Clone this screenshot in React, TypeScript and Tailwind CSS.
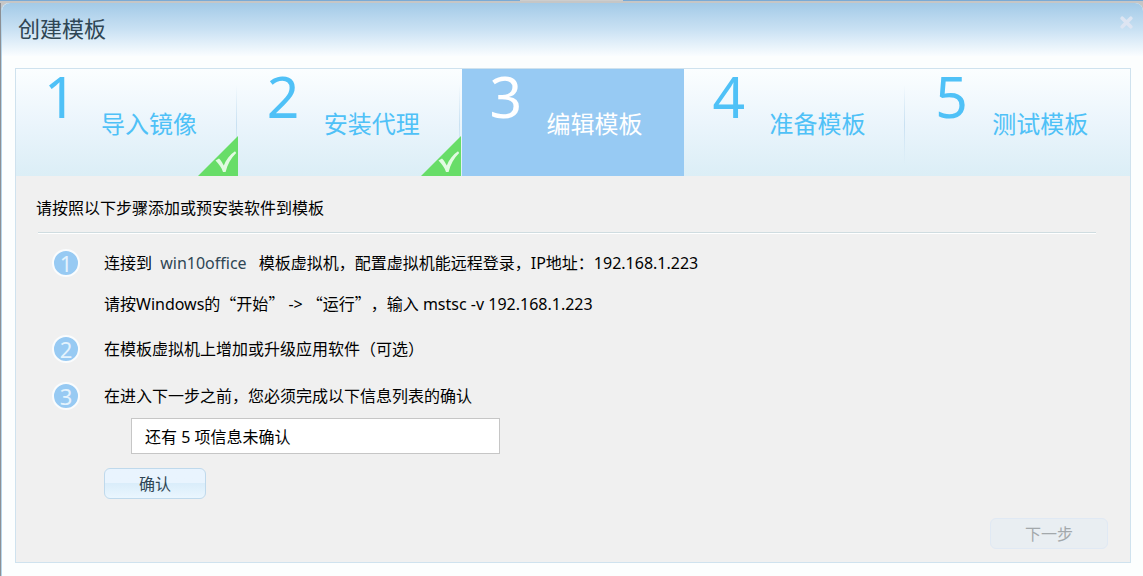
import React from 'react';
import clsx from 'clsx';

type StepState = 'done' | 'active' | 'todo';

const steps: { title: string; state: StepState }[] = [
  { title: '导入镜像', state: 'done' },
  { title: '安装代理', state: 'done' },
  { title: '编辑模板', state: 'active' },
  { title: '准备模板', state: 'todo' },
  { title: '测试模板', state: 'todo' },
];

function DoneMark() {
  return (
    <svg
      className="absolute right-px bottom-0 h-10 w-10"
      viewBox="0 0 40 40"
      aria-label="已完成">
      <path d="M0 40 L40 0 V40 Z" fill="#68dd68" />
      <path
        d="M17.5 24.5 L21 22.5 C23 24.5 24.5 27 25.8 29.5 C28 23.5 32 18.5 37 15.2 L38.2 17 C33 22 29.5 28.5 27.6 36 L25 36 C23.5 31.5 21 28 17.5 24.5 Z"
        fill="#e2fbe2"
      />
    </svg>
  );
}

function Step({ number, title, state }: { number: number; title: string; state: StepState }) {
  const active = state === 'active';
  return (
    <li
      aria-current={active ? 'step' : undefined}
      className={clsx(
        'relative flex flex-1 items-start pl-7',
        active ? 'bg-[#97caf3] text-white' : 'text-[#4fc1f7]'
      )}>
      <span className="w-[57px] text-[57px] leading-[54px]">{number}</span>
      <span className="pt-10 text-2xl leading-[30px]">{title}</span>
      {state === 'done' && <DoneMark />}
      {!active && number !== 5 && (
        <span className="absolute top-4 right-0.5 -z-10 h-20 w-px bg-linear-to-b from-transparent via-[#c9e1f2] to-transparent" />
      )}
    </li>
  );
}

function Bullet({ number }: { number: number }) {
  return (
    <span className="flex h-7 w-7 shrink-0 items-center justify-center rounded-full border-2 border-[#fafcfd] bg-[#97caf3] text-[22px] leading-6 text-[#e4f3fd]">
      {number}
    </span>
  );
}

// full-width quotes, as Chinese text sets them
function Quoted({ children }: { children: string }) {
  return <span className="font-['Noto_Sans_CJK_SC',sans-serif]">“{children}”</span>;
}

export default function App() {
  return (
    <div className="flex min-h-screen flex-col bg-[#c6c6c6] font-['Noto_Sans','Noto_Sans_CJK_SC',sans-serif] text-base leading-6 text-black">
      <div className="flex h-[3px] justify-center border-t border-[#7aaad5]">
        <div className="-mt-px h-px w-[103px] bg-[#cdcdcd]" />
      </div>

      <div className="flex flex-1 flex-col border-l border-[#8c8f94]">
        <div className="flex flex-1 flex-col rounded-t-lg border-l border-[#b5d5ea] bg-[#fcfefe]">
          {/* Title bar */}
          <header className="flex h-[53px] items-start justify-between rounded-t-lg bg-linear-to-b from-[#a3cae7] via-[#c9e1f3] to-[#fafdff] pt-[11px] pr-2.5 pl-4">
            <h1 className="text-[22px] leading-7 text-[#2f4654]">创建模板</h1>
            <button type="button" aria-label="关闭" className="pt-0.5">
              <svg className="h-[13px] w-[13px]" viewBox="0 0 13 13">
                <path d="M2.2 2.2 L10.8 10.8 M10.8 2.2 L2.2 10.8" stroke="#dde5f2" strokeWidth="3.6" strokeLinecap="round" />
              </svg>
            </button>
          </header>

          <main className="mx-3 mt-3 mb-[13px] ml-[13px] flex flex-1 flex-col border border-[#cfe2ee] bg-[#f0f0f0]">
            {/* Wizard steps */}
            <ol className="relative z-0 flex h-[107px] bg-linear-to-b from-[#fbfeff] via-[#ebf5fc] to-[#dbeef6]">
              {steps.map((step, index) => (
                <Step key={step.title} number={index + 1} title={step.title} state={step.state} />
              ))}
            </ol>

            <section className="flex flex-1 flex-col pt-5 pr-[22px] pb-[13px] pl-5">
              <h2>请按照以下步骤添加或预安装软件到模板</h2>
              <hr className="mt-3 mr-3 ml-0.5 h-0.5 border-t border-[#cfdce0] bg-white" />

              <ol className="mt-[15px] ml-4 flex flex-col gap-[19px]">
                <li className="flex gap-6">
                  <Bullet number={1} />
                  <div className="flex flex-col gap-4 pt-0.5">
                    <p>
                      连接到 <span className="mr-2 ml-1 text-[#2f4654]">win10office</span>{' '}
                      模板虚拟机，配置虚拟机能远程登录，IP地址：192.168.1.223
                    </p>
                    <p className="[text-spacing-trim:space-all]">
                      请按Windows的<Quoted>开始</Quoted>
                      <span className="mx-1">-&gt;</span>
                      <Quoted>运行</Quoted>，输入 mstsc -v 192.168.1.223
                    </p>
                  </div>
                </li>
                <li className="flex gap-6">
                  <Bullet number={2} />
                  <p className="pt-0.5">在模板虚拟机上增加或升级应用软件（可选）</p>
                </li>
                <li className="flex gap-6">
                  <Bullet number={3} />
                  <div className="flex flex-col items-start pt-0.5">
                    <label htmlFor="pending">在进入下一步之前，您必须完成以下信息列表的确认</label>
                    <input
                      id="pending"
                      type="text"
                      readOnly
                      value="还有 5 项信息未确认"
                      className="mt-2.5 ml-[27px] h-9 w-[369px] border border-[#c6c6c6] bg-white px-[13px]"
                    />
                    <button
                      type="button"
                      className="mt-3.5 h-[31px] w-[102px] rounded-md border border-[#bfd9ec] bg-linear-to-b from-[#e9f4fe] from-50% via-[#daedfa] via-50% to-[#eaf6fe] text-[#2f4654]">
                      确认
                    </button>
                  </div>
                </li>
              </ol>

              <button
                type="button"
                disabled
                className="mt-auto h-[31px] w-[118px] self-end rounded-md border border-[#e0e9f4] bg-[#e9eef2] text-[#a3a8ab]">
                下一步
              </button>
            </section>
          </main>
        </div>
      </div>
    </div>
  );
}
